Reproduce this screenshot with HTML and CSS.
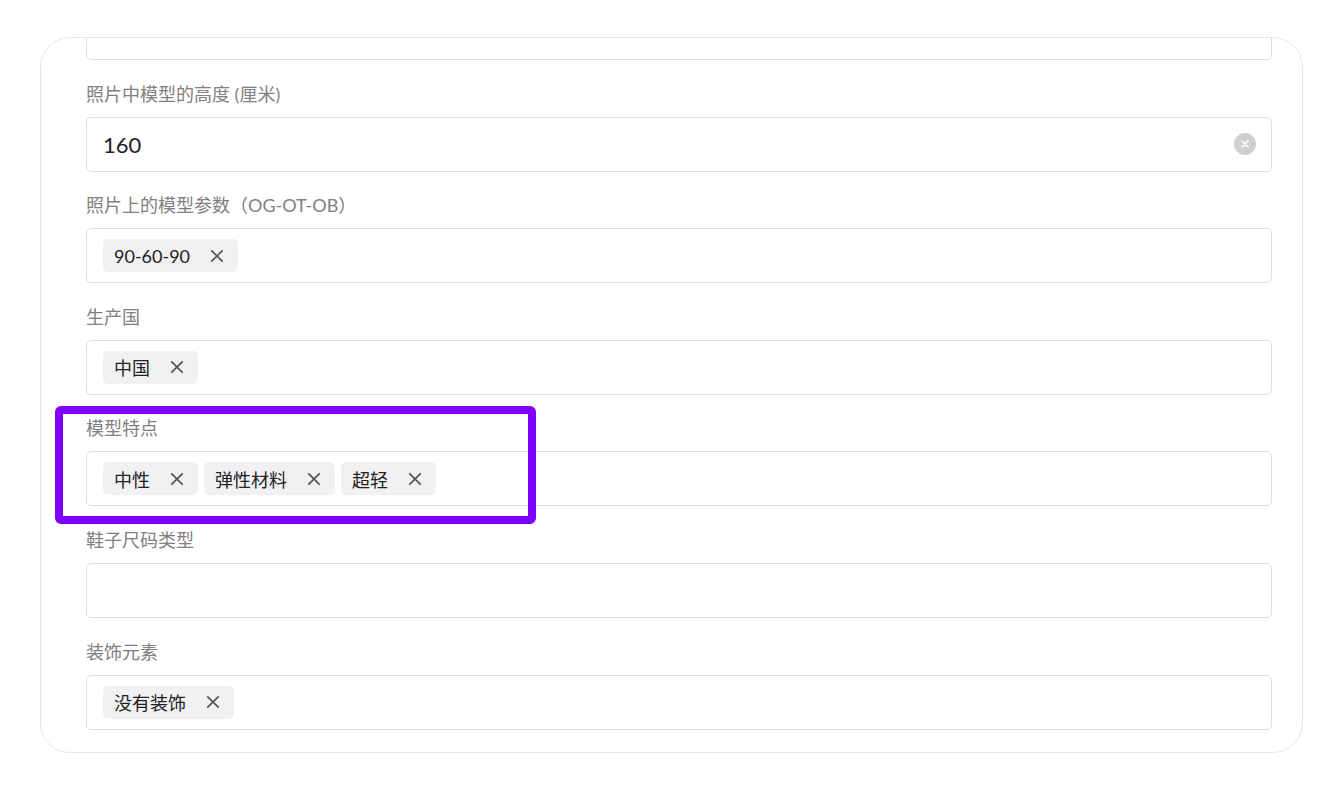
FILE: index.html
```html
<!DOCTYPE html>
<html lang="zh">
<head>
    <meta charset="UTF-8">
    <meta name="viewport" content="width=device-width, initial-scale=1.0">
    <title>模型参数</title>
    <link rel="stylesheet" href="styles.css">
</head>
<body>
    <div class="card">
        <div class="fields">
            <!-- 上一个字段，已滚出可视区 -->
            <div class="field">
                <div class="label"></div>
                <div class="box"></div>
            </div>
            <div class="field">
                <div class="label">照片中模型的高度 (厘米)</div>
                <div class="box text">
                    <span class="value">160</span>
                    <span class="clear">
                        <svg width="10" height="10" viewBox="0 0 10 10"><path d="M2 2L8 8M8 2L2 8" stroke="#fff" stroke-width="1.6" stroke-linecap="round"/></svg>
                    </span>
                </div>
            </div>
            <div class="field">
                <div class="label">照片上的模型参数（OG-OT-OB）</div>
                <div class="box">
                    <span class="chip">90-60-90<svg class="x" viewBox="0 0 14 14"><path d="M2 2L12 12M12 2L2 12"/></svg></span>
                </div>
            </div>
            <div class="field">
                <div class="label">生产国</div>
                <div class="box">
                    <span class="chip">中国<svg class="x" viewBox="0 0 14 14"><path d="M2 2L12 12M12 2L2 12"/></svg></span>
                </div>
            </div>
            <div class="field">
                <div class="label">模型特点</div>
                <div class="box">
                    <span class="chip">中性<svg class="x" viewBox="0 0 14 14"><path d="M2 2L12 12M12 2L2 12"/></svg></span>
                    <span class="chip">弹性材料<svg class="x" viewBox="0 0 14 14"><path d="M2 2L12 12M12 2L2 12"/></svg></span>
                    <span class="chip">超轻<svg class="x" viewBox="0 0 14 14"><path d="M2 2L12 12M12 2L2 12"/></svg></span>
                </div>
                <div class="highlight"></div>
            </div>
            <div class="field">
                <div class="label">鞋子尺码类型</div>
                <div class="box"></div>
            </div>
            <div class="field">
                <div class="label">装饰元素</div>
                <div class="box">
                    <span class="chip">没有装饰<svg class="x" viewBox="0 0 14 14"><path d="M2 2L12 12M12 2L2 12"/></svg></span>
                </div>
            </div>
        </div>
    </div>
</body>
</html>
```

FILE: styles.css
```css
html, body{
    margin: 0;
    padding: 0;
    background: #fff;
}
body{
    font-family: Lato, "Noto Sans CJK SC", sans-serif;
    color: #222;
}

/* 卡片 */
.card{
    margin: 37px 0 0 40px;
    width: 1263px;
    height: 716px;
    box-sizing: border-box;
    border: 1.5px solid #e6e6e6;
    border-radius: 30px;
    overflow: hidden;
    padding: 0 30px 0 45px;
}
/* 列表已向下滚动 */
.fields{
    display: flex;
    flex-direction: column;
    gap: 22.6px;
    margin-top: -67px;
}
.field{
    position: relative;
}
.label{
    font-size: 18px;
    line-height: 22px;
    height: 22px;
    color: #808080;
    margin-bottom: 12px;
}

/* 输入框 */
.box{
    display: flex;
    align-items: center;
    gap: 6px;
    height: 55px;
    box-sizing: border-box;
    border: 1.5px solid #dedede;
    border-radius: 5px;
    padding: 0 15px 0 16px;
}
.box.text{
    justify-content: space-between;
}
.value{
    font-size: 22px;
    color: #222;
}
.clear{
    display: flex;
    align-items: center;
    justify-content: center;
    width: 22px;
    height: 22px;
    border-radius: 50%;
    background: #cfcfcf;
}

/* 标签 */
.chip{
    display: inline-flex;
    align-items: center;
    gap: 19px;
    height: 33px;
    padding: 0 13px 0 11px;
    border-radius: 5px;
    background: #f1f1f3;
    font-size: 18px;
    color: #222;
}
.chip .x{
    width: 16px;
    height: 16px;
    fill: none;
    stroke: #555;
    stroke-width: 1.5;
}

/* 紫色高亮框 */
.highlight{
    position: absolute;
    left: -31px;
    top: -11px;
    width: 481px;
    height: 118px;
    box-sizing: border-box;
    border: 8px solid #7f00ff;
    border-radius: 6px;
}
```
